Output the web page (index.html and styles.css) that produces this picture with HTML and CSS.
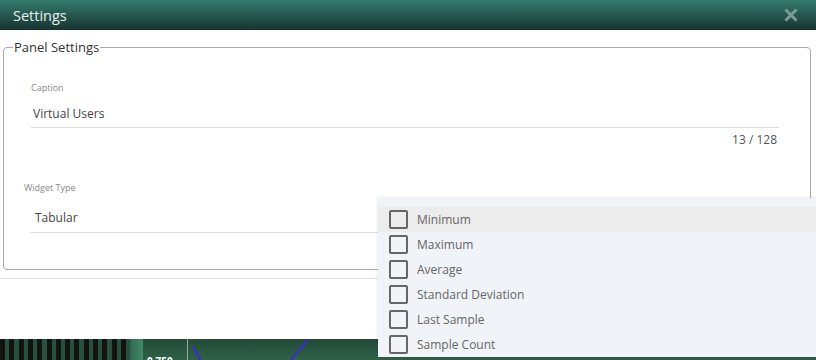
FILE: index.html
```html
<!DOCTYPE html>
<html lang="en">
<head>
    <meta charset="UTF-8">
    <meta name="viewport" content="width=device-width, initial-scale=1.0">
    <title>Settings</title>
    <link rel="stylesheet" href="styles.css">
</head>
<body>

<div class="dialog">
    <div class="dialog-header">
        <span class="dialog-title">Settings</span>
        <svg class="close-button" width="14" height="14" viewBox="0 0 14 14">
            <path d="M1.5 1.5 L12.5 12.5 M12.5 1.5 L1.5 12.5" stroke="#7c9c96" stroke-width="3"/>
        </svg>
    </div>
    <div class="dialog-body">
        <fieldset class="panel">
            <legend>Panel Settings</legend>
            <div class="field caption-field">
                <label for="caption">Caption</label>
                <input type="text" id="caption" value="Virtual Users">
                <div class="counter">13 / 128</div>
            </div>
            <div class="field type-field">
                <label>Widget Type</label>
                <div class="select-value">Tabular</div>
            </div>
        </fieldset>
    </div>
    <div class="dialog-footer"></div>
</div>

<div class="backdrop-strip">
    <div class="stripes"></div>
    <div class="scrollbar"></div>
    <div class="chart">
        <span class="axis-label">0.750</span>
        <div class="axis-line"></div>
        <svg class="chart-lines" width="640" height="22" viewBox="0 0 640 22">
            <line x1="6" y1="7" x2="14" y2="22" stroke="#3a2bd0" stroke-width="2"/>
            <line x1="121" y1="0" x2="103" y2="22" stroke="#3a2bd0" stroke-width="2"/>
        </svg>
    </div>
</div>

<div class="dropdown">
    <div class="option active"><span class="checkbox"></span>Minimum</div>
    <div class="option"><span class="checkbox"></span>Maximum</div>
    <div class="option"><span class="checkbox"></span>Average</div>
    <div class="option"><span class="checkbox"></span>Standard Deviation</div>
    <div class="option"><span class="checkbox"></span>Last Sample</div>
    <div class="option"><span class="checkbox"></span>Sample Count</div>
</div>

</body>
</html>
```

FILE: styles.css
```css
body {
    margin: 0;
    font-family: "Open Sans", Arial, sans-serif;
    background-color: #fff;
    overflow: hidden;
    height: 360px;
    position: relative;
}
.dialog-header {
    height: 30px;
    display: flex;
    align-items: center;
    justify-content: space-between;
    padding: 0 18px 0 13px;
    background: linear-gradient(#357b6d, #173330);
}
.dialog-title {
    color: #e8f0ee;
    font-size: 14.5px;
}
.dialog-body {
    padding: 8px 5px 0 3px;
}
.panel {
    margin: 0;
    padding: 0 0 36px 0;
    border: 1px solid #a9a9a9;
    border-radius: 4px;
    min-width: 0;
}
.panel legend {
    margin-left: 9px;
    padding: 0 1px;
    font-size: 13px;
    color: #333;
}
.field label {
    display: block;
    font-size: 9px;
    color: #888;
}
.caption-field {
    margin: 25px 31px 0 27px;
}
.caption-field input {
    display: block;
    width: 100%;
    box-sizing: border-box;
    margin-top: 11px;
    padding: 0 2px 5px;
    border: none;
    border-bottom: 1px solid #dcdcdc;
    font-family: inherit;
    font-size: 12px;
    color: #444;
    outline: none;
}
.counter {
    text-align: right;
    padding-right: 2px;
    margin-top: 3px;
    font-size: 12px;
    color: #555;
}
.type-field {
    margin: 33px 0 0 20px;
}
.select-value {
    margin: 15px 0 0 6px;
    padding: 0 5px 6px;
    border-bottom: 1px solid #dcdcdc;
    font-size: 12px;
    color: #444;
}
.dialog-footer {
    margin-top: 8px;
    height: 60px;
    border-top: 1px solid #e3e3e3;
}
.backdrop-strip {
    height: 22px;
    display: flex;
}
.stripes {
    width: 130px;
    background: repeating-linear-gradient(90deg, #121412 0 5px, #275040 5px 9.3px);
}
.scrollbar {
    width: 13px;
    background: linear-gradient(90deg, #2f6a50, #418a67);
}
.chart {
    flex: 1;
    position: relative;
    background: linear-gradient(#224a38, #306349);
}
.axis-label {
    position: absolute;
    left: 4px;
    top: 15px;
    font-size: 10px;
    font-weight: bold;
    color: #fff;
}
.axis-line {
    position: absolute;
    left: 44px;
    top: 0;
    width: 1px;
    height: 22px;
    background-color: #9aa9a2;
}
.chart-lines {
    position: absolute;
    left: 44px;
    top: 0;
}
.dropdown {
    position: absolute;
    left: 378px;
    top: 198px;
    width: 460px;
    padding-top: 9px;
    background-color: #f0f3f8;
    box-shadow: 0 0 3px rgba(0,0,0,0.15);
}
.option {
    height: 25px;
    display: flex;
    align-items: center;
    padding-left: 11px;
    font-size: 12px;
    color: #666;
}
.option.active {
    background-color: #ececec;
}
.checkbox {
    width: 15px;
    height: 15px;
    border: 2px solid #666;
    border-radius: 2px;
    margin-right: 9px;
}
```
